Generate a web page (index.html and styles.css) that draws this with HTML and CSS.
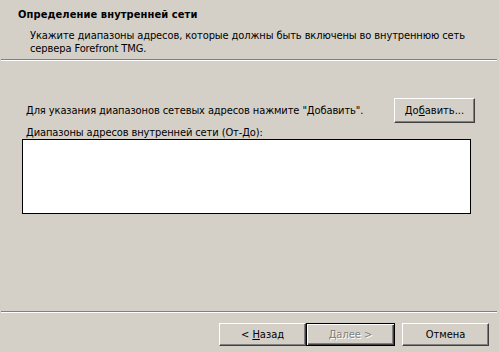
FILE: index.html
```html
<!DOCTYPE html>
<html lang="ru">
<head>
  <meta charset="UTF-8" />
  <title>Определение внутренней сети</title>
  <link rel="stylesheet" href="styles.css">
</head>
<body>

  <div class="wizard">
    <div class="head">
      <h1 class="title">Определение внутренней сети</h1>
      <p class="desc">Укажите диапазоны адресов, которые должны быть включены во внутреннюю сеть сервера Forefront TMG.</p>
    </div>
    <div class="rule"></div>

    <div class="page">
      <div class="add-row">
        <span>Для указания диапазонов сетевых адресов нажмите "Добавить".</span>
        <button class="btn add">До<u>б</u>авить...</button>
      </div>
      <div class="list-label">Диапазоны адресов внутренней сети (От-До):</div>
      <div class="list"></div>
    </div>

    <div class="rule"></div>
    <div class="nav">
      <button class="btn">&lt; <u>Н</u>азад</button>
      <button class="btn default" disabled><u>Д</u>алее &gt;</button>
      <button class="btn cancel">Отмена</button>
    </div>
  </div>

</body>
</html>
```

FILE: styles.css
```css
body {
  margin: 0;
  background: #d4d0c8;
  color: #000;
  font-family: Tahoma, "DejaVu Sans Condensed", "DejaVu Sans", sans-serif;
  font-size: 11px;
  letter-spacing: -0.1px;
}
.wizard {
  width: 499px;
  height: 352px;
  display: flex;
  flex-direction: column;
}
.head {
  height: 59px;
  box-sizing: border-box;
  padding: 8px 0 0 18px;
}
.title {
  margin: 0;
  font-size: 11px;
  font-weight: bold;
  line-height: 13px;
  letter-spacing: 0.1px;
}
.desc {
  margin: 8px 20px 0 12px;
  line-height: 13px;
}
.rule {
  height: 0;
  margin: 0 2px 0 1px;
  border-top: 1px solid #808080;
  border-bottom: 1px solid #fff;
}
.page {
  height: 250px;
  box-sizing: border-box;
  padding: 37px 28px 0 22px;
}
.add-row {
  display: flex;
  align-items: center;
  justify-content: space-between;
  padding-left: 4px;
}
.list-label {
  margin-top: 3px;
  padding-left: 4px;
  line-height: 13px;
}
.list {
  height: 73px;
  margin: 0;
  background: #fff;
  border: 1px solid #000;
}
.btn {
  font: inherit;
  color: #000;
  background: #d4d0c8;
  height: 23px;
  width: 87px;
  padding: 0;
  border: 1px solid;
  border-color: #fff #404040 #404040 #fff;
  box-shadow: inset -1px -1px #808080;
}
.add {
  width: 81px;
  height: 25px;
  margin-right: -4px;
}
.nav {
  display: flex;
  padding: 10px 0 0 219px;
}
.default {
  width: 89px;
  border: 1px solid #000;
  box-shadow: inset 1px 1px #fff, inset -1px -1px #404040, inset -2px -2px #808080;
  color: #808080;
  text-shadow: 1px 1px #fff;
}
.cancel {
  margin-left: 7px;
}
```
